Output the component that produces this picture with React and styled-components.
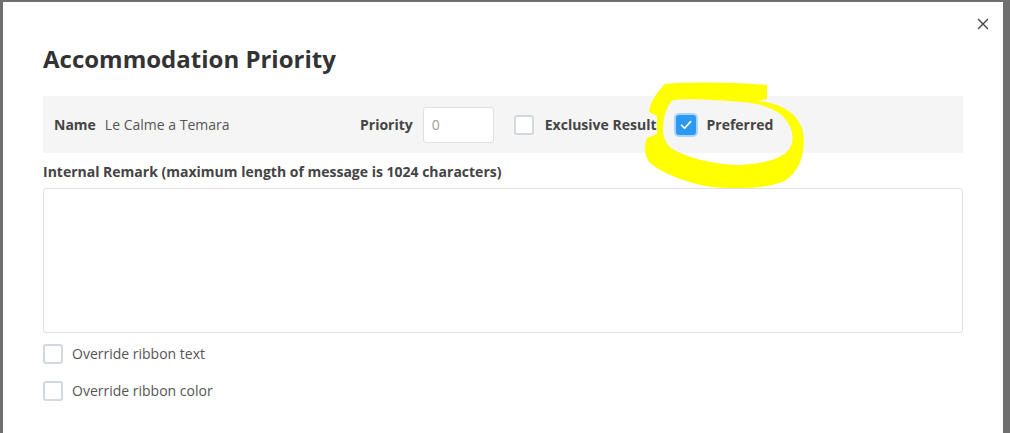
import React from "react";
import styled, { createGlobalStyle } from "styled-components";

const Global = createGlobalStyle`
  html, body { margin: 0; padding: 0; }
  body {
    width: 1010px;
    height: 433px;
    overflow: hidden;
    background: #6f6f6f;
    font-family: "Open Sans", "Noto Sans", sans-serif;
    color: #333;
  }
`;

const Page = styled.div`
  position: relative;
  width: 1010px;
  height: 433px;
  overflow: hidden;
  padding: 2px 0 0 3px;
  box-sizing: border-box;
`;

const Modal = styled.div`
  position: relative;
  width: 1000px;
  height: 460px;
  background: #fff;
  box-sizing: border-box;
  padding: 41px 40px 0 40px;
`;

const Close = styled.button`
  position: absolute;
  top: 14px;
  right: 12px;
  width: 16px;
  height: 16px;
  padding: 0;
  border: 0;
  background: transparent;
  display: flex;
  align-items: center;
  justify-content: center;
`;

const Title = styled.h2`
  margin: 0;
  font-size: 24px;
  line-height: 32px;
  font-weight: 700;
  color: #333;
`;

const InfoRow = styled.div`
  margin-top: 21px;
  height: 57px;
  background: #f5f5f5;
  display: flex;
  align-items: center;
  padding-left: 11px;
`;

const NameGroup = styled.div`
  width: 306px;
  display: flex;
  align-items: center;
  gap: 9px;
`;

const Label = styled.span`
  font-size: 14px;
  font-weight: 700;
  color: #444;
  line-height: 20px;
`;

const Value = styled.span`
  font-size: 14px;
  color: #555;
  line-height: 20px;
`;

const PriorityGroup = styled.div`
  display: flex;
  align-items: center;
  gap: 10px;
`;

const NumberInput = styled.input`
  width: 71px;
  height: 36px;
  box-sizing: border-box;
  border: 1px solid #e0e0e0;
  border-radius: 3px;
  background: #fff;
  padding: 0 8px;
  font-family: inherit;
  font-size: 14px;
  color: #555;
  &::placeholder { color: #a0a0a0; }
`;

const CheckGroup = styled.label`
  display: flex;
  align-items: center;
  gap: ${(p) => (p.$gap ? p.$gap : 9)}px;
  margin-left: ${(p) => p.$ml || 0}px;
`;

const Box = styled.span`
  width: 20px;
  height: 20px;
  box-sizing: border-box;
  border-radius: 3px;
  flex: none;
  display: flex;
  align-items: center;
  justify-content: center;
  border: ${(p) => (p.$checked ? "none" : "2px solid #d3d8de")};
  background: ${(p) => (p.$checked ? "#2b98f2" : "#fff")};
  box-shadow: ${(p) => (p.$checked ? "0 0 0 2px #a9d5fb" : "none")};
`;

const FieldLabel = styled.div`
  margin-top: 9px;
  font-size: 14px;
  font-weight: 700;
  color: #444;
  line-height: 20px;
`;

const TextArea = styled.textarea`
  display: block;
  margin-top: 6px;
  width: 100%;
  height: 145px;
  box-sizing: border-box;
  border: 1px solid #e0e0e0;
  border-radius: 3px;
  resize: none;
  background: #fff;
`;

const Options = styled.div`
  margin-top: 11px;
  display: flex;
  flex-direction: column;
  gap: 17px;
`;

const OptionText = styled.span`
  font-size: 14px;
  color: #555;
  line-height: 20px;
`;

const Scribble = styled.svg`
  position: absolute;
  left: 0;
  top: 0;
  pointer-events: none;
`;

function Check({ checked }) {
  return (
    <Box $checked={checked}>
      {checked && (
        <svg width="14" height="14" viewBox="0 0 14 14">
          <path d="M2.5 7.2 L5.6 10.2 L11.6 3.6" fill="none" stroke="#fff" strokeWidth="1.6" strokeLinecap="round" strokeLinejoin="round" />
        </svg>
      )}
    </Box>
  );
}

export default function App() {
  return (
    <>
      <Global />
      <Page>
        <Modal>
          <Close aria-label="close">
            <svg width="12" height="12" viewBox="0 0 12 12">
              <path d="M1 1 L11 11 M11 1 L1 11" stroke="#444" strokeWidth="1.4" />
            </svg>
          </Close>
          <Title>Accommodation Priority</Title>
          <InfoRow>
            <NameGroup>
              <Label>Name</Label>
              <Value>Le Calme a Temara</Value>
            </NameGroup>
            <PriorityGroup>
              <Label>Priority</Label>
              <NumberInput placeholder="0" />
            </PriorityGroup>
            <CheckGroup $ml={20} $gap={11}>
              <Check />
              <Label>Exclusive Result</Label>
            </CheckGroup>
            <CheckGroup $ml={19} $gap={11}>
              <Check checked />
              <Label>Preferred</Label>
            </CheckGroup>
          </InfoRow>
          <FieldLabel>Internal Remark (maximum length of message is 1024 characters)</FieldLabel>
          <TextArea />
          <Options>
            <CheckGroup $gap={9}>
              <Check />
              <OptionText>Override ribbon text</OptionText>
            </CheckGroup>
            <CheckGroup $gap={9}>
              <Check />
              <OptionText>Override ribbon color</OptionText>
            </CheckGroup>
          </Options>
        </Modal>
        <Scribble width="1010" height="433" viewBox="0 0 1010 433">
          <path
            fillRule="evenodd"
            fill="#ffff00"
            d="M665 84 C690 82 730 82 767 85 L767 99 L758 101 C782 103 799 114 803 132 C806 152 800 170 786 180 C770 189 735 189 712 187 C686 183 662 173 650 163 C644 156 644 145 647 138 L657 134 L657 116 L649 112 C650 102 657 92 665 84 Z
               M673 100 C666 106 663 118 663 130 C663 140 668 148 678 152 C695 160 720 165 740 165 C765 164 784 158 790 148 C796 137 791 122 779 113 C770 107 757 103 742 102 C718 100 690 98 673 100 Z"
          />
        </Scribble>
      </Page>
    </>
  );
}
